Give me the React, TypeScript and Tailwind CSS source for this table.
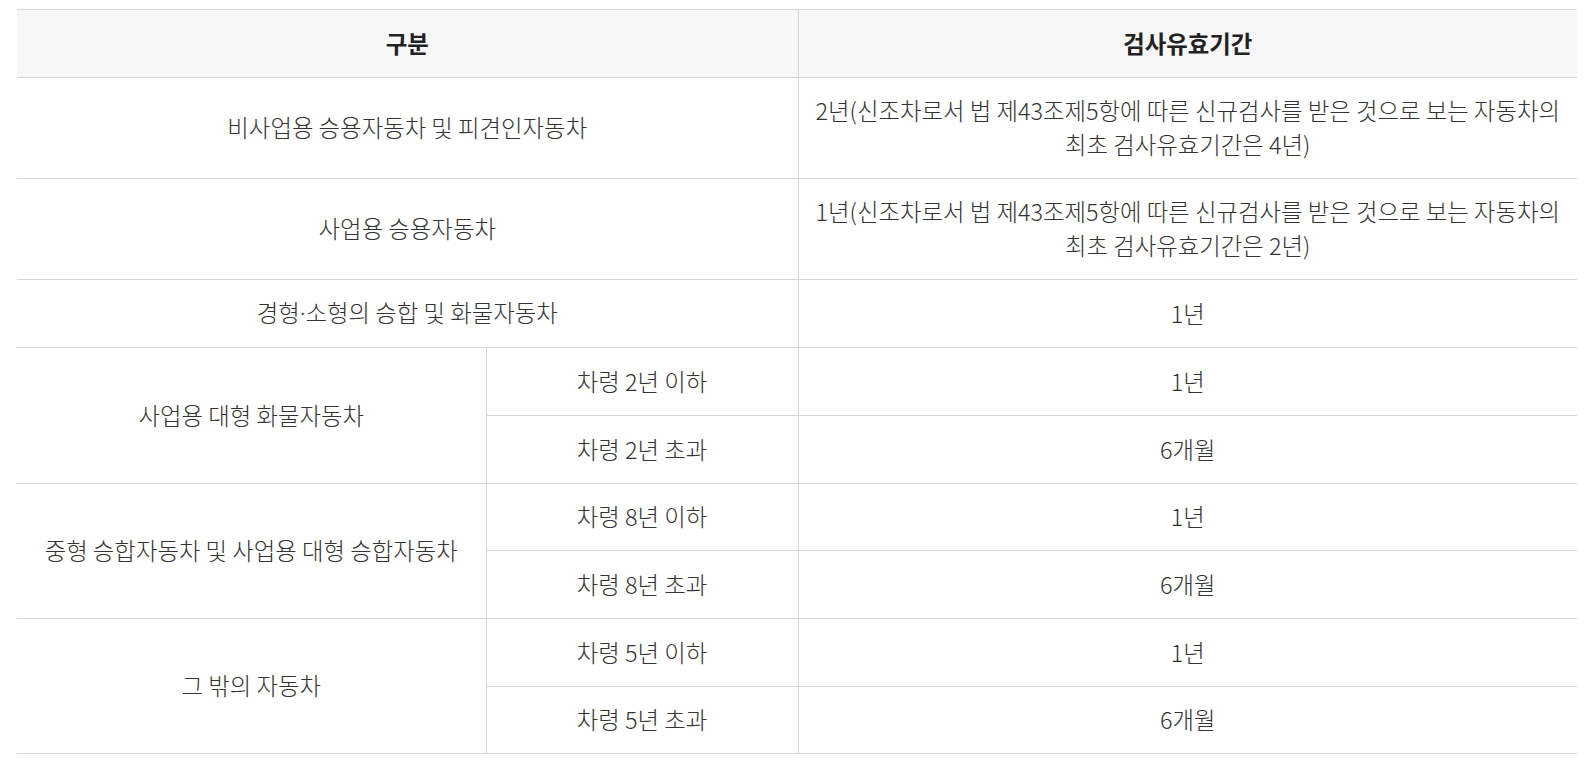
const th =
  "bg-[#f7f7f7] border-b border-[#d7d7d7] px-2 py-[16.7px] leading-[33.3px] text-center font-bold text-[#222]"
const td =
  "border-b border-[#d7d7d7] px-2 py-[16.7px] leading-[33.3px] text-center font-light text-[#333]"

type Group = { name: string; rows: [string, string][] }

const groups: Group[] = [
  {
    name: "사업용 대형 화물자동차",
    rows: [
      ["차령 2년 이하", "1년"],
      ["차령 2년 초과", "6개월"],
    ],
  },
  {
    name: "중형 승합자동차 및 사업용 대형 승합자동차",
    rows: [
      ["차령 8년 이하", "1년"],
      ["차령 8년 초과", "6개월"],
    ],
  },
  {
    name: "그 밖의 자동차",
    rows: [
      ["차령 5년 이하", "1년"],
      ["차령 5년 초과", "6개월"],
    ],
  },
]

export default function App() {
  return (
    <div className="min-h-screen bg-white pt-[9px] pl-[17px] font-['Noto_Sans_CJK_KR','Noto_Sans',sans-serif] text-[23.4px]">
      <table className="w-[1560px] table-fixed border-collapse border-t border-[#d7d7d7]">
        <colgroup>
          <col className="w-[469px]" />
          <col className="w-[312px]" />
          <col className="w-[779px]" />
        </colgroup>
        <thead>
          <tr>
            <th colSpan={2} className={`${th} border-r`}>
              구분
            </th>
            <th className={th}>검사유효기간</th>
          </tr>
        </thead>
        <tbody>
          <tr>
            <td colSpan={2} className={`${td} border-r`}>
              비사업용 승용자동차 및 피견인자동차
            </td>
            <td className={`${td} whitespace-nowrap`}>
              2년(신조차로서 법 제43조제5항에 따른 신규검사를 받은 것으로 보는 자동차의
              <br />
              최초 검사유효기간은 4년)
            </td>
          </tr>
          <tr>
            <td colSpan={2} className={`${td} border-r`}>
              사업용 승용자동차
            </td>
            <td className={`${td} whitespace-nowrap`}>
              1년(신조차로서 법 제43조제5항에 따른 신규검사를 받은 것으로 보는 자동차의
              <br />
              최초 검사유효기간은 2년)
            </td>
          </tr>
          <tr>
            <td colSpan={2} className={`${td} border-r`}>
              경형<span className="font-['Noto_Sans',sans-serif]">·</span>소형의 승합 및 화물자동차
            </td>
            <td className={td}>1년</td>
          </tr>
          {groups.map((g) =>
            g.rows.map(([age, period], i) => (
              <tr key={g.name + i}>
                {i === 0 && (
                  <td rowSpan={2} className={`${td} border-r`}>
                    {g.name}
                  </td>
                )}
                <td className={`${td} border-r`}>{age}</td>
                <td className={td}>{period}</td>
              </tr>
            ))
          )}
        </tbody>
      </table>
    </div>
  )
}
